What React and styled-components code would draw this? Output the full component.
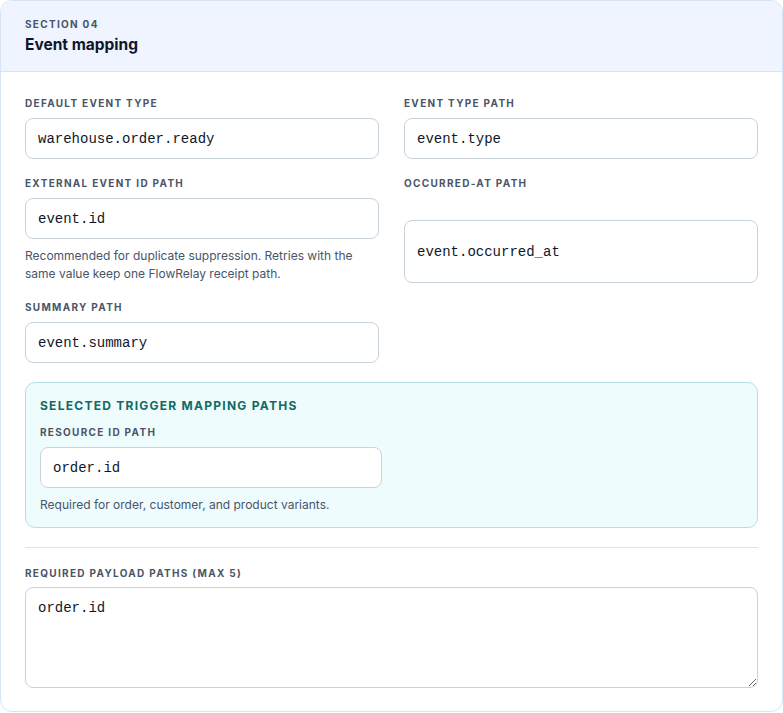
import React from 'react'
import styled, { createGlobalStyle } from 'styled-components'

const Global = createGlobalStyle`
    * { box-sizing: border-box; }
    body {
        margin: 0;
        background: #fff;
        font-family: Inter, "Noto Sans", sans-serif;
        color: #0f172a;
    }
`

const App = () => {
    return (
        <>
            <Global />
            <Card>
                <Header>
                    <Eyebrow>Section 04</Eyebrow>
                    <Title>Event mapping</Title>
                </Header>
                <Body>
                    <Grid>
                        <Field>
                            <Label>Default event type</Label>
                            <Input defaultValue="warehouse.order.ready" />
                        </Field>
                        <Field>
                            <Label>Event type path</Label>
                            <Input defaultValue="event.type" />
                        </Field>
                        <Field>
                            <Label>External event ID path</Label>
                            <Input defaultValue="event.id" />
                            <Help>
                                Recommended for duplicate suppression. Retries with the
                                same value keep one FlowRelay receipt path.
                            </Help>
                        </Field>
                        <Field>
                            <Label>Occurred-at path</Label>
                            <Input defaultValue="event.occurred_at" />
                        </Field>
                        <Field>
                            <Label>Summary path</Label>
                            <Input defaultValue="event.summary" />
                        </Field>
                        <Field />
                    </Grid>
                    <TriggerBox>
                        <BoxTitle>Selected trigger mapping paths</BoxTitle>
                        <BoxGrid>
                            <Field>
                                <Label>Resource ID path</Label>
                                <Input defaultValue="order.id" />
                                <Help>Required for order, customer, and product variants.</Help>
                            </Field>
                        </BoxGrid>
                    </TriggerBox>
                    <Divider />
                    <Field $tight>
                        <Label>Required payload paths (max 5)</Label>
                        <TextArea defaultValue="order.id" />
                    </Field>
                </Body>
            </Card>
        </>
    )
}

const Card = styled.section`
    width: 783px;
    border: 1px solid #d8e3f3;
    border-radius: 12px;
    background: #fff;
    overflow: hidden;
`
const Header = styled.header`
    background: #eff4fe;
    border-bottom: 1px solid #d8e3f3;
    padding: 16px 24px 15px;
`
const Eyebrow = styled.div`
    font-size: 10px;
    line-height: 14px;
    font-weight: 700;
    letter-spacing: 0.13em;
    text-transform: uppercase;
    color: #475569;
`
const Title = styled.h2`
    margin: 3px 0 0;
    font-size: 15.5px;
    line-height: 22px;
    font-weight: 700;
    color: #0f172a;
`
const Body = styled.div`
    padding: 24px 24px 23px;
    display: flex;
    flex-direction: column;
    gap: 19px;
`
const Grid = styled.div`
    display: grid;
    grid-template-columns: 1fr 1fr;
    column-gap: 25px;
    row-gap: 17px;
`
const Field = styled.label`
    display: grid;
    gap: ${({ $tight }) => ($tight ? '7px' : '8px')};
    margin-top: ${({ $tight }) => ($tight ? '-1px' : '0')};
`
const Label = styled.span`
    font-size: 10px;
    line-height: 14px;
    font-weight: 700;
    letter-spacing: 0.13em;
    text-transform: uppercase;
    color: #4a5568;
`
const Input = styled.input`
    width: 100%;
    height: 100%;
    min-height: 41px;
    border: 1px solid #c9d3dc;
    border-radius: 8px;
    background: #fff;
    padding: 0 12px;
    font-family: "Liberation Mono", "DejaVu Sans Mono", monospace;
    font-size: 14px;
    line-height: 22px;
    color: #0f172a;
    outline: none;
`
const Help = styled.p`
    margin: 0;
    font-size: 12px;
    line-height: 18px;
    color: #475569;
`
const TriggerBox = styled.div`
    background: #effcfd;
    border: 1px solid #b8dfe0;
    border-radius: 10px;
    padding: 14px 14px 13px;
    display: flex;
    flex-direction: column;
    gap: 10px;
`
const BoxTitle = styled.div`
    font-size: 12px;
    line-height: 18px;
    font-weight: 700;
    letter-spacing: 0.105em;
    text-transform: uppercase;
    color: #0f6b63;
`
const BoxGrid = styled.div`
    display: grid;
    grid-template-columns: 1fr 1fr;
    column-gap: 20px;
`
const Divider = styled.hr`
    margin: 0;
    border: 0;
    border-top: 1px solid #dbe4ee;
`
const TextArea = styled.textarea`
    width: 100%;
    height: 101px;
    border: 1px solid #c9d3dc;
    border-radius: 8px;
    padding: 10px 12px;
    font-family: "Liberation Mono", "DejaVu Sans Mono", monospace;
    font-size: 14px;
    line-height: 20px;
    color: #0f172a;
    resize: vertical;
    outline: none;
`

export default App
